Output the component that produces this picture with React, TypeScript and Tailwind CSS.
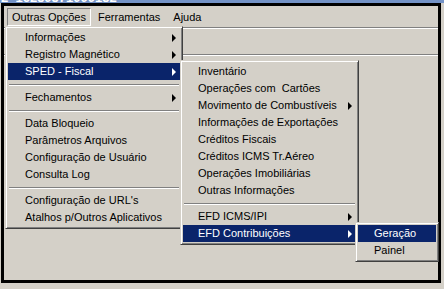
import React from "react";

type Item =
  | { kind: "sep" }
  | { kind: "item"; label: string; arrow?: boolean; active?: boolean };

const menu1: Item[] = [
  { kind: "item", label: "Informações", arrow: true },
  { kind: "item", label: "Registro Magnético", arrow: true },
  { kind: "item", label: "SPED - Fiscal", arrow: true, active: true },
  { kind: "sep" },
  { kind: "item", label: "Fechamentos", arrow: true },
  { kind: "sep" },
  { kind: "item", label: "Data Bloqueio" },
  { kind: "item", label: "Parâmetros Arquivos" },
  { kind: "item", label: "Configuração de Usuário" },
  { kind: "item", label: "Consulta Log" },
  { kind: "sep" },
  { kind: "item", label: "Configuração de URL's" },
  { kind: "item", label: "Atalhos p/Outros Aplicativos" },
];

const menu2: Item[] = [
  { kind: "item", label: "Inventário" },
  { kind: "item", label: "Operações com  Cartões" },
  { kind: "item", label: "Movimento de Combustíveis", arrow: true },
  { kind: "item", label: "Informações de Exportações" },
  { kind: "item", label: "Créditos Fiscais" },
  { kind: "item", label: "Créditos ICMS Tr.Aéreo" },
  { kind: "item", label: "Operações Imobiliárias" },
  { kind: "item", label: "Outras Informações" },
  { kind: "sep" },
  { kind: "item", label: "EFD ICMS/IPI", arrow: true },
  { kind: "item", label: "EFD Contribuições", arrow: true, active: true },
];

const menu3: Item[] = [
  { kind: "item", label: "Geração", active: true },
  { kind: "item", label: "Painel" },
];

function MenuItems({ items, pl }: { items: Item[]; pl: string }) {
  return (
    <>
      {items.map((it, i) =>
        it.kind === "sep" ? (
          <div key={i} className="h-[9px] flex items-center px-[1px]">
            <div className="w-full h-[2px] border-t border-t-[#808080] border-b border-b-white" />
          </div>
        ) : (
          <div
            key={i}
            className={
              "relative h-[17px] leading-[17px] whitespace-pre " +
              pl +
              (it.active ? " bg-[#0a246a] text-white" : " text-black")
            }
          >
            {it.label}
            {it.arrow && (
              <span
                className={
                  "absolute right-[4px] top-[5px] w-0 h-0 border-y-[4px] border-y-transparent border-l-[4px] " +
                  (it.active ? "border-l-white" : "border-l-black")
                }
              />
            )}
          </div>
        )
      )}
    </>
  );
}

const menuFrame =
  "absolute bg-[#d4d0c8] border border-t-[#d4d0c8] border-l-[#d4d0c8] border-r-[#404040] border-b-[#404040] shadow-[inset_1px_1px_0_#ffffff,inset_-1px_-1px_0_#808080] p-[2px]";

export default function App() {
  return (
    <div className="relative w-[444px] h-[289px] bg-[#d4d0c8] overflow-hidden font-['Tahoma','Liberation_Sans',sans-serif] text-[11px]">
      {/* title strip */}
      <div className="h-[3px] bg-[#7392c6] overflow-hidden">
        <div className="mt-[-9px] pl-[1px] text-[13px] leading-[13px] font-bold text-white whitespace-pre">
          2  16250571000152
        </div>
      </div>

      {/* window frame */}
      <div className="ml-[1px] w-[440px] h-[280px] border-[3px] border-black flex flex-col bg-[#d4d0c8]">
        {/* menu bar */}
        <div className="flex pt-[2px] pl-[3px] h-[20px]">
          <div className="h-[18px] leading-[16px] px-[4px] border border-t-[#808080] border-l-[#808080] border-r-white border-b-white text-black">
            Outras Opções
          </div>
          <div className="h-[18px] leading-[18px] px-[7px] text-black">Ferramentas</div>
          <div className="h-[18px] leading-[18px] px-[6px] text-black">Ajuda</div>
        </div>
        {/* toolbar panel lines */}
        <div className="mt-[1px] flex h-[28px] border-t border-t-[#808080] border-b border-b-[#808080] shadow-[inset_0_1px_0_#ffffff]">
          <div className="w-[179px] border-r-2 border-r-[#808080]" />
          <div className="flex-1" />
        </div>
        <div className="h-[1px] bg-white" />
      </div>

      {/* dropdown menu 1 */}
      <div className={menuFrame + " left-[5px] top-[26px] w-[178px]"}>
        <MenuItems items={menu1} pl="pl-[17px]" />
      </div>

      {/* submenu SPED - Fiscal */}
      <div className={menuFrame + " left-[180px] top-[60px] w-[179px]"}>
        <MenuItems items={menu2} pl="pl-[15px]" />
      </div>

      {/* submenu EFD Contribuições */}
      <div className={menuFrame + " left-[355px] top-[222px] w-[84px]"}>
        <MenuItems items={menu3} pl="pl-[16px]" />
      </div>
    </div>
  );
}
